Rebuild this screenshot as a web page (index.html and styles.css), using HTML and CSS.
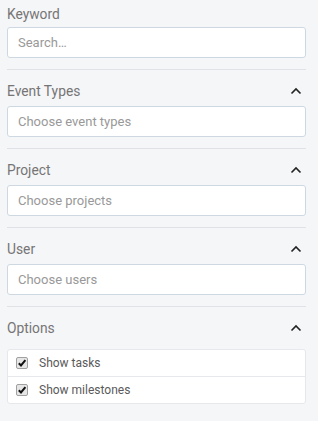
FILE: index.html
```html
<!DOCTYPE html>
<html lang="en">
<head>
  <meta charset="UTF-8" />
  <title>Filters</title>
  <link rel="stylesheet" href="styles.css">
</head>
<body>
  <div class="filters">
    <div class="section first">
      <div class="section-head">
        <span class="label">Keyword</span>
      </div>
      <input class="field" type="text" placeholder="Search…">
    </div>

    <div class="section">
      <div class="section-head">
        <span class="label">Event Types</span>
        <svg class="chevron" width="12" height="8" viewBox="0 0 12 8"><path d="M1.5 6.5 L6 2 L10.5 6.5" /></svg>
      </div>
      <input class="field" type="text" placeholder="Choose event types">
    </div>

    <div class="section">
      <div class="section-head">
        <span class="label">Project</span>
        <svg class="chevron" width="12" height="8" viewBox="0 0 12 8"><path d="M1.5 6.5 L6 2 L10.5 6.5" /></svg>
      </div>
      <input class="field" type="text" placeholder="Choose projects">
    </div>

    <div class="section">
      <div class="section-head">
        <span class="label">User</span>
        <svg class="chevron" width="12" height="8" viewBox="0 0 12 8"><path d="M1.5 6.5 L6 2 L10.5 6.5" /></svg>
      </div>
      <input class="field" type="text" placeholder="Choose users">
    </div>

    <div class="section last">
      <div class="section-head">
        <span class="label">Options</span>
        <svg class="chevron" width="12" height="8" viewBox="0 0 12 8"><path d="M1.5 6.5 L6 2 L10.5 6.5" /></svg>
      </div>
      <div class="options">
        <label class="option">
          <span class="check"><svg width="10" height="10" viewBox="0 0 10 10"><path d="M1.8 5.2 L4 7.4 L8.4 2.2" /></svg></span>
          Show tasks
        </label>
        <label class="option">
          <span class="check"><svg width="10" height="10" viewBox="0 0 10 10"><path d="M1.8 5.2 L4 7.4 L8.4 2.2" /></svg></span>
          Show milestones
        </label>
      </div>
    </div>
  </div>
</body>
</html>
```

FILE: styles.css
```css
body {
  margin: 0;
  background: #f5f6f8;
  font-family: Roboto, "Liberation Sans", sans-serif;
  color: #666;
  min-height: 421px;
}

.filters {
  padding: 0 12px 0 7px;
}

.section {
  padding: 11px 0 11px;
  border-bottom: 1px solid #dfe3e8;
}

.section.first {
  padding-top: 4px;
}

.section.last {
  border-bottom: none;
}

.section-head {
  display: flex;
  align-items: center;
  justify-content: space-between;
  height: 20px;
  margin-bottom: 5px;
}

.section.first .section-head {
  margin-bottom: 3px;
}

.label {
  font-size: 13.8px;
  line-height: 20px;
  color: #757575;
}

.chevron {
  margin-right: 4px;
}

.chevron path {
  fill: none;
  stroke: #222;
  stroke-width: 1.6;
}

.field {
  display: block;
  box-sizing: border-box;
  width: 100%;
  height: 31px;
  margin: 0;
  padding: 0 10px;
  border: 1px solid #cdd8e3;
  border-radius: 3px;
  background: #fff;
  font-family: Roboto, "Liberation Sans", sans-serif;
  font-size: 13px;
  color: #333;
  outline: none;
}

.field::placeholder {
  color: #999;
}

.options {
  margin-top: 11px;
  border: 1px solid #e6e8eb;
  border-radius: 3px;
  background: #fff;
}

.option {
  display: flex;
  align-items: center;
  height: 26px;
  padding-left: 8px;
  font-size: 12px;
  color: #5a5a5a;
}

.option + .option {
  border-top: 1px solid #e6e8eb;
}

.check {
  display: flex;
  align-items: center;
  justify-content: center;
  width: 10px;
  height: 10px;
  margin-right: 11px;
  border: 1px solid #a0a0a0;
  border-radius: 2px;
  background: #e6e6e6;
}

.check path {
  fill: none;
  stroke: #111;
  stroke-width: 2;
}
```
